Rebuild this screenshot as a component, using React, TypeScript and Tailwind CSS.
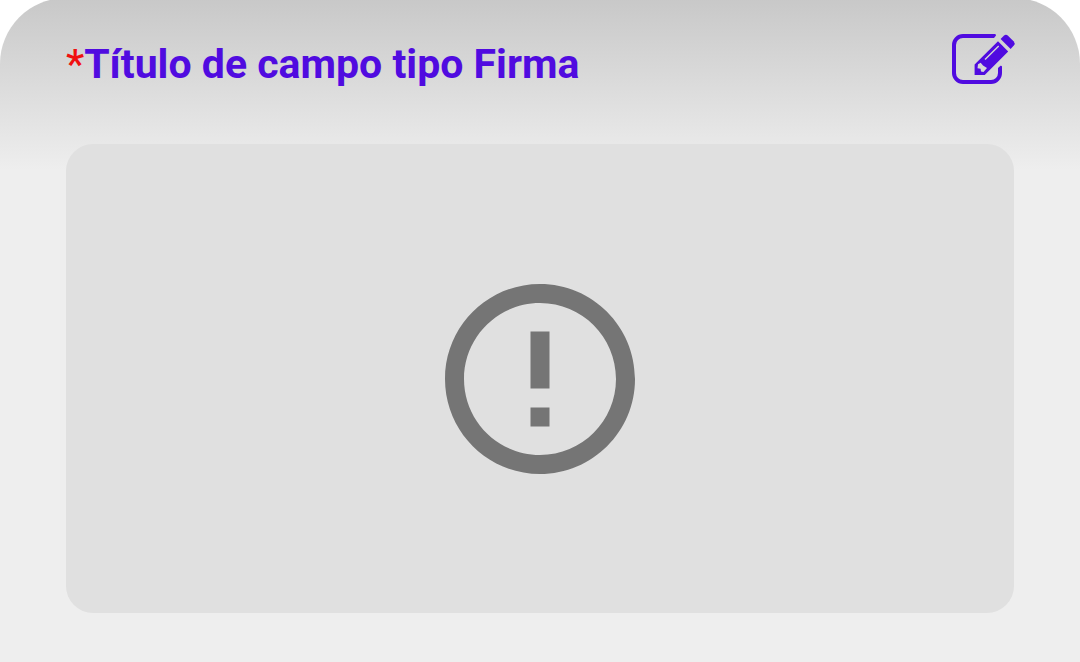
function EditIcon() {
  return (
    <svg viewBox="0 0 64 50" className="h-[50px] w-16" aria-hidden="true">
      <path
        d="M42 2H11a9 9 0 0 0-9 9v28a9 9 0 0 0 9 9h28a9 9 0 0 0 9-9v-4"
        fill="none"
        stroke="currentColor"
        strokeWidth="4"
      />
      <path d="M41 0h2q1 .2 1 1.500L42 4h-1zM46 35.500v-1.500l2.500-2.200q1.500-.2 1.500 1v2.700z" fill="currentColor" />
      <path
        fill="currentColor"
        fillRule="evenodd"
        d="M22.600 30.500 46 7.300 56.200 17.500 32.700 41H22.600zM32.500 25 33.500 26 47.200 12.600 46.200 11.600zM26 30.200 28.700 28.700 31 31.500 35 34 31.500 38 29 37.500 28.600 34.700 25.500 34.300z"
      />
      <path
        fill="currentColor"
        d="M48.600 5 51.800 1.700Q54 0 56 1.700L61.800 7.500Q63.500 9.500 61.800 11.500L58.600 14.900z"
      />
    </svg>
  );
}

function AlertIcon() {
  return (
    <svg viewBox="0 0 24 24" className="size-[228px] text-[#757575]" role="img" aria-label="Error">
      <path
        fill="currentColor"
        d="M11 15h2v2h-2zm0-8h2v6h-2zm.990-5C6.470 2 2 6.480 2 12s4.470 10 9.990 10C17.520 22 22 17.520 22 12S17.520 2 11.990 2zM12 20c-4.420 0-8-3.580-8-8s3.580-8 8-8 8 3.580 8 8-3.580 8-8 8z"
      />
    </svg>
  );
}

export default function App() {
  return (
    <div className="min-h-screen overflow-hidden bg-white font-['Roboto',sans-serif]">
      <section className="-mt-0.5 flex min-h-[calc(100vh+2px)] flex-col rounded-t-[66px] bg-[#eeeeee] bg-[linear-gradient(to_bottom,#c8c8c8_0px,#eeeeee_172px)] px-16 pt-9 pb-[49px]">
        <header className="flex items-start justify-between pl-0.5">
          <h1 className="pt-1.5 text-[41px] leading-[48px] font-bold text-[#500be0]">
            <span className="font-medium text-[#f01010]">*</span>
            Título de campo tipo Firma
          </h1>
          <button type="button" aria-label="Editar firma" className="text-[#500be0]">
            <EditIcon />
          </button>
        </header>
        <div className="mx-0.5 mt-14 flex flex-1 items-center justify-center rounded-[27px] bg-[#e0e0e0]">
          <AlertIcon />
        </div>
      </section>
    </div>
  );
}
